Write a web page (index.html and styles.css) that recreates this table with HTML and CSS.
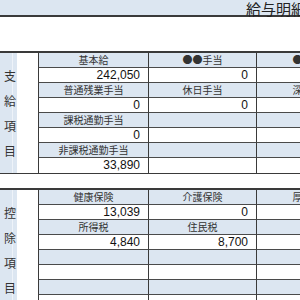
FILE: index.html
```html
<!DOCTYPE html>
<html lang="ja">
<head>
<meta charset="utf-8">
<link rel="stylesheet" href="styles.css">
</head>
<body>
<header class="topbar"><h1 class="title">給与明細</h1></header>
<section class="sheet sheet-pay">
  <div class="side"><span>支</span><span>給</span><span>項</span><span>目</span></div>
  <div class="cell lab">基本給</div><div class="cell lab">●●手当</div><div class="cell lab">●●手当</div>
  <div class="cell val">242,050</div><div class="cell val">0</div><div class="cell val"></div>
  <div class="cell lab">普通残業手当</div><div class="cell lab">休日手当</div><div class="cell lab">深夜手当</div>
  <div class="cell val">0</div><div class="cell val">0</div><div class="cell val"></div>
  <div class="cell lab">課税通勤手当</div><div class="cell lab"></div><div class="cell lab"></div>
  <div class="cell val">0</div><div class="cell val"></div><div class="cell val"></div>
  <div class="cell lab">非課税通勤手当</div><div class="cell lab"></div><div class="cell lab"></div>
  <div class="cell val">33,890</div><div class="cell val"></div><div class="cell val"></div>
</section>
<section class="sheet sheet-ded">
  <div class="side"><span>控</span><span>除</span><span>項</span><span>目</span></div>
  <div class="cell lab">健康保険</div><div class="cell lab">介護保険</div><div class="cell lab">厚生年金</div>
  <div class="cell val">13,039</div><div class="cell val">0</div><div class="cell val"></div>
  <div class="cell lab">所得税</div><div class="cell lab">住民税</div><div class="cell lab"></div>
  <div class="cell val">4,840</div><div class="cell val">8,700</div><div class="cell val"></div>
  <div class="cell lab"></div><div class="cell lab"></div><div class="cell lab"></div>
  <div class="cell val"></div><div class="cell val"></div><div class="cell val"></div>
  <div class="cell lab"></div><div class="cell lab"></div><div class="cell lab"></div>
  <div class="cell val"></div><div class="cell val"></div><div class="cell val"></div>
</section>
</body>
</html>
```
FILE: styles.css
```css
html, body {
  margin: 0;
  padding: 0;
  overflow: hidden;
  background: #ffffff;
  font-family: "Noto Sans CJK JP", sans-serif;
  color: #222;
}
.topbar {
  height: 15px;
  background: #dce6f1;
  border-bottom: 2px solid #3a3a3a;
  margin-bottom: 34px;
}
.title {
  margin: 0;
  padding: 1px 0 0 246px;
  font-size: 15px;
  line-height: 15px;
  font-weight: normal;
  white-space: nowrap;
  color: #222;
}
.sheet {
  display: grid;
  grid-template-columns: 38px 110px 108px 112px;
  grid-auto-rows: 15px;
  width: 368px;
  border-top: 2px solid #3a3a3a;
  border-bottom: 1px solid #3a3a3a;
}
.sheet-ded {
  margin-top: 14px;
}
.side {
  grid-row: 1 / span 8;
  grid-column: 1;
  background: #dce6f1;
  box-shadow: inset -4px 0 0 #dce6f1, inset -5px 0 0 #eef3f9;
  display: flex;
  flex-direction: column;
  justify-content: center;
  gap: 12px;
  padding-left: 4px;
  width: 13px;
  font-size: 12px;
  line-height: 13px;
  color: #333;
}
.cell {
  box-sizing: border-box;
  border-left: 1px solid #3a3a3a;
  border-bottom: 1px solid #4a4a4a;
  white-space: nowrap;
  overflow: hidden;
}
.sheet .cell:nth-last-child(-n+3) {
  border-bottom: none;
}
.lab {
  background: #dce6f1;
  text-align: center;
  font-size: 10px;
  line-height: 14px;
  color: #333;
}
.val {
  background: #ffffff;
  text-align: right;
  padding-right: 8px;
  font-family: "Liberation Sans", "Noto Sans CJK JP", sans-serif;
  font-size: 12px;
  line-height: 14px;
  color: #111;
}
```
